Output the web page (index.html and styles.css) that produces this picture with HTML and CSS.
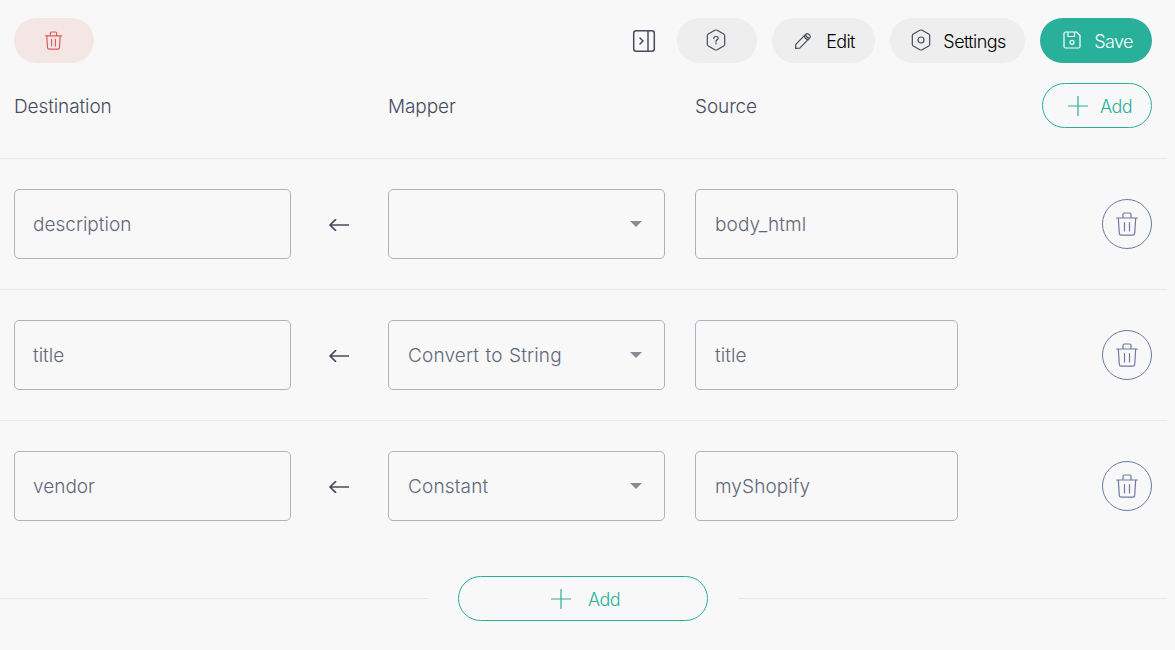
FILE: index.html
```html
<!DOCTYPE html>
<html lang="en">
<head>
    <meta charset="UTF-8">
    <meta name="viewport" content="width=device-width, initial-scale=1.0">
    <title>Mapping</title>
    <link rel="stylesheet" href="styles.css">
</head>
<body>
<!-- Shared icons -->
<svg class="sprite" xmlns="http://www.w3.org/2000/svg">
    <symbol id="trash" viewBox="0 0 22 24">
        <path d="M.6 6h20.800M7 6V2.300Q7 1 8.300 1h5.400Q15 1 15 2.300V6M2.300 6l1 15.200Q3.400 23.200 5.200 23.200h11.600q1.800 0 1.900-2l1-15.200M8.500 10.500v8.500M13.500 10.500v8.500"/>
    </symbol>
    <symbol id="plus" viewBox="0 0 20 20">
        <path d="M10 .5v19M.5 10h19"/>
    </symbol>
    <symbol id="arrow" viewBox="0 0 20 12">
        <path d="M19.500 6H1M6.500 .7L1 6l5.500 5.300"/>
    </symbol>
</svg>

<div class="page">
    <!-- Toolbar -->
    <div class="toolbar">
        <button class="btn btn-danger"><svg class="icon-trash-sm"><use href="#trash"/></svg></button>
        <div class="actions">
            <button class="btn-panel">
                <svg width="24" height="24" viewBox="0 0 24 24">
                    <rect x="1.700" y="1.700" width="20.600" height="20.600" rx="2.500"/>
                    <path d="M16 2v20M8 9l3 3-3 3"/>
                </svg>
            </button>
            <button class="btn btn-help">
                <svg width="20" height="22" viewBox="0 0 20 22">
                    <path d="M8.800 1.300q1.200-.6 2.400 0l6.500 3.600q1 .6 1 1.800v8.600q0 1.200-1 1.800l-6.500 3.600q-1.200.6-2.400 0l-6.500-3.600q-1-.6-1-1.800V6.700q0-1.200 1-1.800z"/>
                    <path d="M7.800 9.500q0-2 2.200-2t2.200 1.800q0 1-1.200 1.600-1 .5-1 1.500M10 13.800v1.200"/>
                </svg>
            </button>
            <button class="btn btn-edit">
                <svg width="18" height="18" viewBox="0 0 18 18">
                    <path d="M1.600 16.400l.2-4.100L11.600 2.300q1.500-1.500 3-.1l1 1q1.400 1.500 0 3L5.700 16.200zM10.200 3.800q.8 3.200 4 4M11.600 2.300q.5 3.300 4 3.900"/>
                </svg>
                <span>Edit</span>
            </button>
            <button class="btn btn-settings">
                <svg width="20" height="22" viewBox="0 0 20 22">
                    <path d="M8.800 1.300q1.200-.6 2.400 0l6.500 3.600q1 .6 1 1.800v8.600q0 1.200-1 1.800l-6.500 3.600q-1.200.6-2.400 0l-6.500-3.600q-1-.6-1-1.800V6.700q0-1.200 1-1.800z"/>
                    <circle cx="10" cy="11" r="3"/>
                </svg>
                <span>Settings</span>
            </button>
            <button class="btn btn-save">
                <svg width="18" height="18" viewBox="0 0 18 18">
                    <path d="M2.500 1h11L17 4.500v11q0 1.500-1.500 1.500h-13Q1 17 1 15.500v-13Q1 1 2.500 1zM5 1v4.500h6.500V1"/>
                    <circle cx="9" cy="11.300" r="2"/>
                </svg>
                <span>Save</span>
            </button>
        </div>
    </div>

    <!-- Column titles -->
    <div class="row row-head">
        <div class="title">Destination</div>
        <div class="title col-mapper">Mapper</div>
        <div class="title col-source">Source</div>
        <button class="btn btn-add"><svg class="icon-plus"><use href="#plus"/></svg><span>Add</span></button>
    </div>

    <!-- Mapping rows -->
    <div class="row">
        <div class="field">description</div>
        <div class="arrow"><svg><use href="#arrow"/></svg></div>
        <div class="field select"></div>
        <div class="field source">body_html</div>
        <button class="btn-remove"><svg><use href="#trash"/></svg></button>
    </div>
    <div class="row">
        <div class="field">title</div>
        <div class="arrow"><svg><use href="#arrow"/></svg></div>
        <div class="field select">Convert to String</div>
        <div class="field source">title</div>
        <button class="btn-remove"><svg><use href="#trash"/></svg></button>
    </div>
    <div class="row">
        <div class="field">vendor</div>
        <div class="arrow"><svg><use href="#arrow"/></svg></div>
        <div class="field select">Constant</div>
        <div class="field source">myShopify</div>
        <button class="btn-remove"><svg><use href="#trash"/></svg></button>
    </div>

    <!-- Bottom add -->
    <div class="add-line">
        <button class="btn btn-add"><svg class="icon-plus"><use href="#plus"/></svg><span>Add</span></button>
    </div>
</div>
</body>
</html>
```

FILE: styles.css
```css
* {
    margin: 0;
    padding: 0;
    box-sizing: border-box;
}

body {
    font-family: Inter, "Liberation Sans", sans-serif;
    font-size: 19px;
    font-weight: 300;
    background-color: #f8f8f8;
    color: #464c5e;
}

svg {
    display: block;
    flex: none;
    fill: none;
    stroke: currentColor;
    stroke-width: 1.2;
    stroke-linecap: round;
    stroke-linejoin: round;
}

.sprite {
    position: absolute;
    width: 0;
    height: 0;
}

.page {
    width: 1167px;
    padding-top: 18px;
}

/* Toolbar */
.toolbar {
    display: flex;
    justify-content: space-between;
    padding: 0 15px 0 14px;
    margin-bottom: 20px;
}

.actions {
    display: flex;
    align-items: center;
    gap: 15px;
}

button {
    font: inherit;
    flex: none;
    border: none;
    background: none;
    color: #464c5e;
    cursor: pointer;
}

.btn {
    display: flex;
    align-items: center;
    justify-content: center;
    height: 45px;
    border-radius: 23px;
    background-color: #eee;
    font-size: 18px;
    letter-spacing: -0.6px;
}

.btn span {
    color: #000;
    padding-top: 1px;
}

.btn-danger {
    width: 80px;
    padding-right: 2px;
    background-color: #f5e6e6;
    color: #e05a5a;
}

.icon-trash-sm {
    width: 17px;
    height: 19px;
    margin-bottom: 1px;
    stroke-width: 1.5;
}

.btn-panel {
    margin-right: 6px;
}

.btn-panel svg {
    stroke-width: 1.5;
}

.btn-help {
    width: 80px;
    padding-right: 2px;
}

.btn-help svg,
.btn-settings svg {
    margin-bottom: 1px;
}

.btn-edit {
    width: 103px;
    gap: 14px;
    padding-left: 2px;
}

.btn-settings {
    width: 135px;
    gap: 12px;
    padding-left: 2px;
}

.btn-save {
    width: 112px;
    gap: 13px;
    padding-left: 4px;
    background-color: #29b09a;
    color: #fff;
}

.btn-save svg {
    margin-bottom: 1px;
}

.btn-save span {
    color: #fff;
}

.btn-add {
    width: 110px;
    gap: 12px;
    padding-left: 6px;
    border: 1px solid #29b09a;
    background: none;
    color: #29b09a;
}

.btn-add span {
    color: #29b09a;
}

.icon-plus {
    width: 20px;
    height: 20px;
}

/* Rows */
.row {
    display: flex;
    align-items: center;
    height: 131px;
    padding: 0 15px 0 14px;
    border-top: 1px solid #e7e7e7;
}

.row-head {
    height: 75px;
    padding-bottom: 30px;
    border-top: none;
}

.title {
    flex: none;
    width: 374px;
    padding-top: 2px;
    letter-spacing: -0.1px;
}

.col-mapper {
    width: 307px;
}

.col-source {
    width: auto;
}

.row .btn-add,
.btn-remove {
    margin-left: auto;
}

.field {
    display: flex;
    align-items: center;
    width: 263px;
    height: 70px;
    padding: 0 20px 0 18px;
    border: 1px solid #b0b2bd;
    border-radius: 5px;
    color: #62687a;
}

.source {
    padding-left: 19px;
    letter-spacing: 0.1px;
}

.field:first-child,
.select {
    width: 277px;
}

.select {
    justify-content: space-between;
    margin-right: 30px;
    padding-left: 19px;
    padding-right: 22px;
    letter-spacing: 0.15px;
    word-spacing: 1px;
}

.select::after {
    content: "";
    margin-left: auto;
    border: 6.500px solid transparent;
    border-top-color: #878c97;
    border-bottom: none;
}

.arrow {
    display: flex;
    justify-content: center;
    width: 97px;
    padding: 2px 2px 0 0;
}

.arrow svg {
    width: 20px;
    height: 12px;
    stroke-width: 1.7;
}

.btn-remove {
    display: flex;
    align-items: center;
    justify-content: center;
    width: 50px;
    height: 50px;
    border: 1px solid #6b7aa6;
    border-radius: 50%;
    color: #6b7aa6;
}

.btn-remove svg {
    width: 22px;
    height: 24px;
}

/* Bottom add */
.add-line {
    display: flex;
    align-items: center;
    gap: 30px;
    padding-top: 25px;
}

.add-line::before,
.add-line::after {
    content: "";
    flex: 1;
    height: 1px;
    background-color: #e7e7e7;
}

.add-line::before {
    flex: none;
    width: 428px;
}

.add-line .btn-add {
    width: 250px;
    gap: 17px;
    padding-left: 5px;
}
```
